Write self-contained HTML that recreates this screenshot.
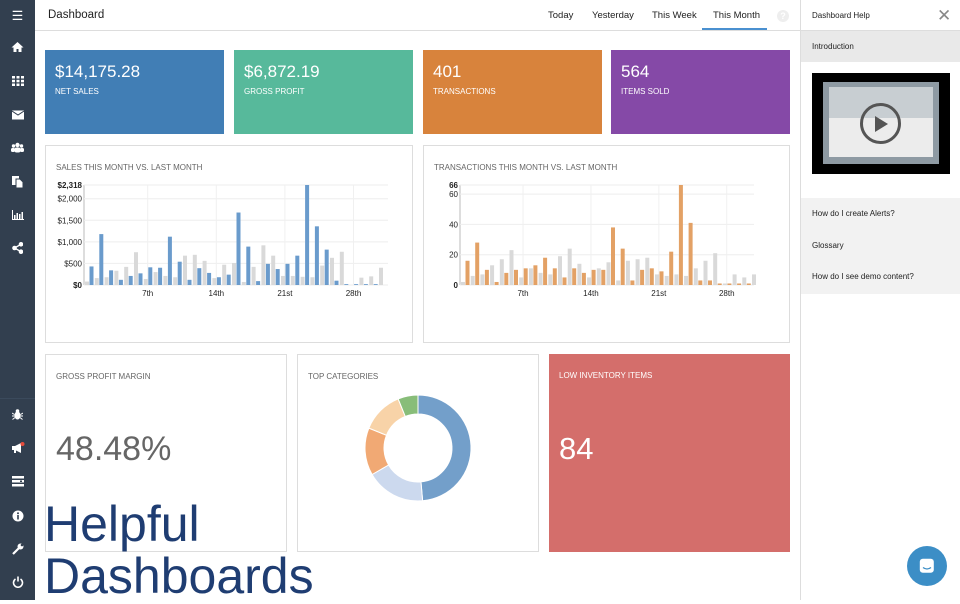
<!DOCTYPE html>
<html><head><meta charset="utf-8"><style>
*{margin:0;padding:0;box-sizing:border-box}
body{width:960px;height:600px;overflow:hidden;background:#fff;font-family:"Liberation Sans",sans-serif;position:relative;color:#333}
.abs{position:absolute}
#sb{left:0;top:0;width:35px;height:600px;background:#323f4f}
.ic{position:absolute;left:0;width:35px;text-align:center;color:#fff;font-size:13px;line-height:14px}
#hdr{left:35px;top:0;width:765px;height:31px;border-bottom:1px solid #ddd}
.tab{position:absolute;top:10px;font-size:9.5px;color:#222}
.card{position:absolute;top:50px;height:84px;width:179px;color:#fff}
.card .v{position:absolute;left:10px;top:12px;font-size:17px}
.card .l{position:absolute;left:10px;top:37px;font-size:8px}
.pan{position:absolute;border:1px solid #ddd;background:#fff}
.pt{position:absolute;left:10px;top:17px;font-size:8px;color:#666}
#rp{left:800px;top:0;width:160px;height:600px;border-left:1px solid #ddd;background:#fff}
.rt{position:absolute;left:11px;font-size:8px;color:#222}
</style></head><body>
<div id="sb" class="abs">
<div class="ic" style="top:9px;font-size:13px">&#9776;</div>
<div class="ic" style="top:41px"><svg width="13" height="12" viewBox="0 0 13 12"><path d="M6.5 1L0.5 6.5h2V11h3V8h2v3h3V6.5h2z" fill="#fff"/></svg></div>
<div class="ic" style="top:75px"><svg width="12" height="10"><g fill="#fff"><rect x="0" y="0" width="3" height="2.5"/><rect x="4.5" y="0" width="3" height="2.5"/><rect x="9" y="0" width="3" height="2.5"/><rect x="0" y="3.8" width="3" height="2.5"/><rect x="4.5" y="3.8" width="3" height="2.5"/><rect x="9" y="3.8" width="3" height="2.5"/><rect x="0" y="7.5" width="3" height="2.5"/><rect x="4.5" y="7.5" width="3" height="2.5"/><rect x="9" y="7.5" width="3" height="2.5"/></g></svg></div>
<div class="ic" style="top:109px"><svg width="12" height="10"><rect width="12" height="9" y="0.5" fill="#fff"/><path d="M0 1l6 4 6-4" stroke="#323f4f" fill="none"/></svg></div>
<div class="ic" style="top:142px"><svg width="13" height="11"><g fill="#fff"><circle cx="6.5" cy="3" r="2.2"/><circle cx="2.5" cy="4" r="1.7"/><circle cx="10.5" cy="4" r="1.7"/><rect x="3.5" y="5.5" width="6" height="5" rx="2"/><rect x="0" y="6" width="4" height="4" rx="1.5"/><rect x="9" y="6" width="4" height="4" rx="1.5"/></g></svg></div>
<div class="ic" style="top:176px"><svg width="11" height="12"><rect x="0" y="0" width="7" height="9" fill="#fff"/><path d="M4 3h4l3 3v6H4z" fill="#fff" stroke="#323f4f"/></svg></div>
<div class="ic" style="top:209px"><svg width="12" height="10"><path d="M0.5 0v9.5H12" stroke="#fff" fill="none"/><g fill="#fff"><rect x="2" y="5" width="1.5" height="4"/><rect x="4.5" y="3" width="1.5" height="6"/><rect x="7" y="4" width="1.5" height="5"/><rect x="9.5" y="2" width="1.5" height="7"/></g></svg></div>
<div class="ic" style="top:242px"><svg width="11" height="12"><g fill="#fff"><circle cx="2.5" cy="6" r="2.3"/><circle cx="9" cy="2.3" r="2.3"/><circle cx="9" cy="9.7" r="2.3"/></g><path d="M2.5 6L9 2.3M2.5 6L9 9.7" stroke="#fff" stroke-width="1.4"/></svg></div>
<div style="position:absolute;top:398px;left:0;width:35px;border-top:1px solid #3b4a5c"></div>
<div class="ic" style="top:409px"><svg width="11" height="11"><ellipse cx="5.5" cy="6.5" rx="3" ry="4" fill="#fff"/><circle cx="5.5" cy="2" r="1.8" fill="#fff"/><path d="M0 4l2.5 1.5M11 4L8.5 5.5M0 7h3M11 7H8M0.5 10.5l2.5-2M10.5 10.5L8 8.5" stroke="#fff"/></svg></div>
<div class="ic" style="top:442px"><svg width="14" height="12"><path d="M1 4h3l6-3v10l-6-3H1z" fill="#fff"/><rect x="3" y="7" width="2" height="4" fill="#fff"/><circle cx="11.5" cy="2" r="2" fill="#e74c3c"/></svg></div>
<div class="ic" style="top:476px"><svg width="12" height="11"><g fill="#fff"><rect y="0" width="12" height="2.5"/><rect y="4" width="12" height="2.5"/><rect y="8" width="12" height="2.5"/></g><rect x="8" y="4.5" width="2" height="1.5" fill="#323f4f"/></svg></div>
<div class="ic" style="top:510px"><svg width="12" height="12"><circle cx="6" cy="6" r="5.5" fill="#fff"/><rect x="5.2" y="5" width="1.6" height="4.5" fill="#323f4f"/><circle cx="6" cy="3.2" r="1" fill="#323f4f"/></svg></div>
<div class="ic" style="top:543px"><svg width="12" height="12"><path d="M1 11l6-6" stroke="#fff" stroke-width="2.2"/><circle cx="8.5" cy="3.5" r="3" fill="#fff"/><circle cx="10" cy="2" r="1.3" fill="#323f4f"/></svg></div>
<div class="ic" style="top:576px"><svg width="12" height="12"><path d="M3.5 3A4.5 4.5 0 1 0 8.5 3" stroke="#fff" stroke-width="1.6" fill="none"/><path d="M6 0.5v5" stroke="#fff" stroke-width="1.6"/></svg></div>
</div>
<div id="hdr" class="abs">
<div style="position:absolute;left:13px;top:9px;font-size:11.5px;color:#222">Dashboard</div>
<div class="tab" style="left:513px">Today</div>
<div class="tab" style="left:557px">Yesterday</div>
<div class="tab" style="left:617px">This Week</div>
<div class="tab" style="left:678px">This Month</div>
<div style="position:absolute;left:667px;top:28px;width:65px;height:2px;background:#4a90d0"></div>
<div style="position:absolute;left:742px;top:10px;width:12px;height:12px;border-radius:50%;background:#eee;color:#fff;font-size:9px;text-align:center;line-height:12px;font-weight:bold">?</div>
</div>
<div class="card" style="left:45px;background:#417eb5"><div class="v">$14,175.28</div><div class="l">NET SALES</div></div>
<div class="card" style="left:234px;background:#57b99b"><div class="v">$6,872.19</div><div class="l">GROSS PROFIT</div></div>
<div class="card" style="left:423px;background:#d8833c"><div class="v">401</div><div class="l">TRANSACTIONS</div></div>
<div class="card" style="left:611px;background:#8549a7"><div class="v">564</div><div class="l">ITEMS SOLD</div></div>

<div class="pan" style="left:45px;top:145px;width:368px;height:198px"><div class="pt">SALES THIS MONTH VS. LAST MONTH</div></div>
<div class="pan" style="left:423px;top:145px;width:367px;height:198px"><div class="pt">TRANSACTIONS THIS MONTH VS. LAST MONTH</div></div>
<svg id="c1" class="abs" style="left:0;top:0" width="800" height="310"></svg>

<div class="pan" style="left:45px;top:354px;width:242px;height:198px"><div class="pt">GROSS PROFIT MARGIN</div><div style="position:absolute;left:10px;top:75px;font-size:34px;color:#666">48.48%</div></div>
<div class="pan" style="left:297px;top:354px;width:242px;height:198px"><div class="pt">TOP CATEGORIES</div></div>
<div class="abs" style="left:549px;top:354px;width:241px;height:198px;background:#d46e6b"><div class="pt" style="color:#fff">LOW INVENTORY ITEMS</div><div style="position:absolute;left:10px;top:77px;font-size:31px;color:#fff">84</div></div>
<svg class="abs" style="left:360px;top:390px" width="116" height="116" viewBox="-58 -58 116 116" id="donut"></svg>

<div class="abs" style="left:44px;top:498px;font-size:50px;line-height:52px;color:#1f3d72">Helpful<br>Dashboards</div>

<div id="rp" class="abs">
<div style="position:absolute;left:0;top:0;width:160px;height:31px;border-bottom:1px solid #ddd"></div>
<div class="rt" style="top:11px">Dashboard Help</div>
<div style="position:absolute;left:136px;top:6px;font-size:17px;color:#888">&#10005;</div>
<div style="position:absolute;left:0;top:31px;width:160px;height:31px;background:#e9e9e9"></div>
<div class="rt" style="top:42px">Introduction</div>
<div style="position:absolute;left:11px;top:73px;width:138px;height:101px;background:#000">
<div style="position:absolute;left:11px;top:9px;width:116px;height:82px;background:#8e9aa3"></div>
<div style="position:absolute;left:17px;top:14px;width:104px;height:70px;background:#ececec"></div>
<div style="position:absolute;left:17px;top:14px;width:104px;height:31px;background:#c8ced2"></div>
<div style="position:absolute;left:48px;top:30px;width:41px;height:41px;border-radius:50%;border:3px solid #555"></div>
<svg style="position:absolute;left:62px;top:42px" width="16" height="18"><path d="M1 1l13 8-13 8z" fill="#555"/></svg>
</div>
<div style="position:absolute;left:0;top:198px;width:160px;height:96px;background:#f2f2f2"></div>
<div class="rt" style="top:209px">How do I create Alerts?</div>
<div class="rt" style="top:241px">Glossary</div>
<div class="rt" style="top:272px">How do I see demo content?</div>
<div style="position:absolute;left:106px;top:546px;width:40px;height:40px;border-radius:50%;background:#3c8ec6"><svg style="position:absolute;left:12px;top:12px" width="16" height="16"><rect x="0.8" y="0.8" width="14" height="14" rx="3" fill="#fff"/><path d="M4 9.5q4 3 8 0" stroke="#3c8ec6" stroke-width="1.3" fill="none"/></svg></div>
</div>
<script>
var s=document.getElementById('c1');var h='';
function chart(x0,x1,y0,ymax,maxv,ticks,yl,gray,col,colv,dx){
 h+='<line x1="'+x0+'" y1="'+ymax+'" x2="'+x0+'" y2="'+y0+'" stroke="#bbb"/>';
 ticks.forEach(function(t){var y=y0-(t[0]/maxv)*(y0-ymax);h+='<line x1="'+x0+'" x2="'+x1+'" y1="'+y+'" y2="'+y+'" stroke="#eee"/><text x="'+(x0-2)+'" y="'+(y+3)+'" font-size="8" text-anchor="end" fill="#222" '+(t[2]?'font-weight="bold"':'')+'>'+t[1]+'</text>';});
 [7,14,21,28].forEach(function(d,i){var x=x0+(d-0.5)*dx;h+='<line x1="'+x+'" x2="'+x+'" y1="'+ymax+'" y2="'+y0+'" stroke="#f0f0f0"/><text x="'+x+'" y="'+(y0+11)+'" font-size="8" text-anchor="middle" fill="#222">'+['7th','14th','21st','28th'][i]+'</text>';});
 for(var i=0;i<31;i++){var bx=x0+1+i*dx;var g=gray[i]||0;var gh=g/maxv*(y0-ymax);h+='<rect x="'+bx+'" y="'+(y0-gh)+'" width="4" height="'+gh+'" fill="#d9d9d9"/>';var c=colv[i];if(c!==undefined){var ch=c/maxv*(y0-ymax);h+='<rect x="'+(bx+4.5)+'" y="'+(y0-ch)+'" width="4" height="'+ch+'" fill="'+col+'"/>';}}
}
chart(84,388,285,185,2318,[[0,'$0',1],[500,'$500'],[1000,'$1,000'],[1500,'$1,500'],[2000,'$2,000'],[2318,'$2,318',1]],0,
[80,160,180,330,420,760,140,300,210,180,680,700,560,160,470,510,70,420,920,680,210,210,190,180,450,630,770,0,170,200,400],'#6a9bcc',
[430,1180,340,120,210,270,410,400,1120,540,120,390,280,180,240,1680,890,90,490,370,490,680,2318,1360,820,100,20,20,20,20],9.8);
chart(460,754,285,185,66,[[0,'0',1],[20,'20'],[40,'40'],[60,'60'],[66,'66',1]],0,
[2,6,7,13,17,23,5,11,8,7,19,24,14,5,11,15,3,16,17,18,7,6,7,6,11,16,21,1,7,5,7],'#e3a165',
[16,28,10,2,8,10,11,13,18,11,5,11,8,10,10,38,24,3,10,11,9,22,66,41,3,3,1,1,1,1],9.7);
s.innerHTML=h;
var d=document.getElementById('donut');var segs=[[0,175,'#739fca'],[175,240,'#ccd9ee'],[240,292,'#f1a974'],[292,338,'#f8d3a8'],[338,360,'#88bd79']];var dh='';
segs.forEach(function(g){var R=53,r=34;function p(a,rr){a=(a-90)*Math.PI/180;return (rr*Math.cos(a)).toFixed(2)+' '+(rr*Math.sin(a)).toFixed(2);}var l=(g[1]-g[0])>180?1:0;dh+='<path d="M'+p(g[0],R)+' A53 53 0 '+l+' 1 '+p(g[1],R)+' L'+p(g[1],r)+' A34 34 0 '+l+' 0 '+p(g[0],r)+'Z" fill="'+g[2]+'" stroke="#fff" stroke-width="1"/>';});
d.innerHTML=dh;
</script>
</body></html>
